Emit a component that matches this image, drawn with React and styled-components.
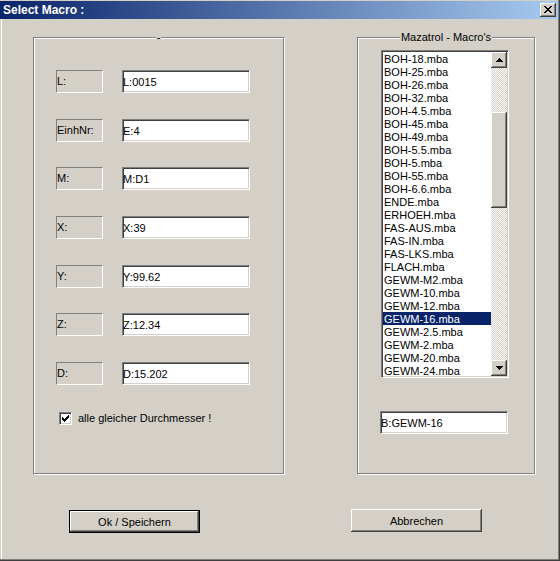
import React from "react";
import styled, { createGlobalStyle } from "styled-components";

const GlobalStyle = createGlobalStyle`
  html, body {
    margin: 0;
    padding: 0;
    background: #d4d0c8;
  }
  body {
    font-family: "Liberation Sans", Arial, sans-serif;
    font-size: 11px;
    color: #000;
  }
`;

const raised = `
  box-shadow: inset -1px -1px #404040, inset 1px 1px #fff, inset -2px -2px #808080;
`;

const sunken = `
  border: 1px solid;
  border-color: #808080 #fff #fff #808080;
  box-shadow: inset 1px 1px #404040, inset -1px -1px #d4d0c8;
`;

const Window = styled.div`
  width: 560px;
  height: 561px;
  box-sizing: border-box;
  display: flex;
  flex-direction: column;
  padding: 1px 2px 2px 0;
  background: #d4d0c8;
  box-shadow: inset -1px -1px #404040, inset -2px -2px #808080,
    inset 1px 1px #d4d0c8, inset 2px 2px #fff;
`;

const TitleBar = styled.div`
  height: 18px;
  flex-shrink: 0;
  display: flex;
  align-items: center;
  justify-content: space-between;
  padding: 0 2px 0 3px;
  background: linear-gradient(90deg, #0a246a, #a6caf0);
`;

const TitleText = styled.span`
  color: #fff;
  font-weight: bold;
  font-size: 12px;
  line-height: 18px;
  white-space: nowrap;
`;

const CloseButton = styled.div`
  width: 16px;
  height: 14px;
  box-sizing: border-box;
  background: #d4d0c8;
  display: flex;
  align-items: center;
  justify-content: center;
  ${raised}

  svg {
    display: block;
    margin: 0 1px 1px 0;
  }
`;

const Body = styled.div`
  flex: 1;
  display: flex;
  flex-direction: column;
  padding: 18px 0 0 33px;
`;

const Groups = styled.div`
  display: flex;
  gap: 73px;
`;

const Group = styled.div`
  position: relative;
  box-sizing: border-box;
  width: ${({ $width }) => $width}px;
  height: 437px;
  border: 1px solid #808080;
  box-shadow: 1px 1px 0 #fff, inset 1px 1px 0 #fff;
  padding: ${({ $pad }) => $pad};
`;

const Caption = styled.span`
  position: absolute;
  top: -7px;
  left: 0;
  right: 0;
  margin: 0 auto;
  width: fit-content;
  padding: 0 1px;
  background: #d4d0c8;
  line-height: 13px;
  white-space: nowrap;
`;

const FieldGrid = styled.div`
  display: grid;
  grid-template-columns: 47px 128px;
  column-gap: 19px;
  row-gap: 25.67px;
`;

const Label = styled.div`
  box-sizing: border-box;
  height: 23px;
  border: 1px solid;
  border-color: #808080 #fff #fff #808080;
  padding: 4px 0 0 0;
  line-height: 13px;
  white-space: nowrap;
`;

const TextBox = styled.input`
  box-sizing: border-box;
  width: 128px;
  height: 23px;
  margin: 0 0 0 ${({ $shift }) => $shift || 0}px;
  padding: 1px 0 0 0;
  background: #fff;
  font-family: "Liberation Sans", Arial, sans-serif;
  font-size: 11px;
  color: #000;
  outline: none;
  ${sunken}
`;

const CheckRow = styled.label`
  display: flex;
  align-items: center;
  gap: 6px;
  margin-top: 27px;
  padding-left: 3px;
  line-height: 13px;
`;

const CheckBox = styled.span`
  width: 13px;
  height: 13px;
  box-sizing: border-box;
  background: #fff;
  display: flex;
  align-items: center;
  justify-content: center;
  ${sunken}

  svg {
    display: block;
  }
`;

const ListBox = styled.div`
  width: 128px;
  height: 328px;
  box-sizing: border-box;
  display: flex;
  background: #fff;
  padding: 1px;
  ${sunken}
`;

const Items = styled.ul`
  flex: 1;
  margin: 0;
  padding: 0;
  list-style: none;
  overflow: hidden;
`;

const Item = styled.li`
  height: 13px;
  line-height: 15px;
  padding-left: 1px;
  white-space: nowrap;
  background: ${({ $selected }) => ($selected ? "#0a246a" : "transparent")};
  color: ${({ $selected }) => ($selected ? "#fff" : "#000")};
`;

const ScrollBar = styled.div`
  width: 16px;
  flex-shrink: 0;
  display: flex;
  flex-direction: column;
`;

const ScrollButton = styled.div`
  height: 16px;
  flex-shrink: 0;
  box-sizing: border-box;
  background: #d4d0c8;
  display: flex;
  align-items: center;
  justify-content: center;
  ${raised}

  svg {
    display: block;
  }
`;

const Track = styled.div`
  flex: ${({ $size }) => ($size ? `0 0 ${$size}px` : "1")};
  background: repeating-conic-gradient(#fff 0 25%, #d4d0c8 0 50%) 0 0 / 2px 2px;
`;

const Thumb = styled.div`
  height: 96px;
  flex-shrink: 0;
  background: #d4d0c8;
  ${raised}
`;

const SelectedField = styled(TextBox)`
  margin-top: 33px;
`;

const ButtonRow = styled.div`
  display: flex;
  align-items: flex-start;
  gap: 151px;
  margin-top: 35px;
  padding-left: 36px;
`;

const Button = styled.button`
  width: 131px;
  height: 23px;
  box-sizing: border-box;
  margin-top: ${({ $default }) => ($default ? "1px" : "0")};
  padding: 0;
  border: ${({ $default }) => ($default ? "1px solid #000" : "none")};
  background: #d4d0c8;
  font-family: "Liberation Sans", Arial, sans-serif;
  font-size: 11px;
  color: #000;
  ${raised}
`;

const fields = [
  ["L:", "L:0015"],
  ["EinhNr:", "E:4"],
  ["M:", "M:D1"],
  ["X:", "X:39"],
  ["Y:", "Y:99.62"],
  ["Z:", "Z:12.34"],
  ["D:", "D:15.202"],
];

const macros = [
  "BOH-18.mba", "BOH-25.mba", "BOH-26.mba", "BOH-32.mba", "BOH-4.5.mba",
  "BOH-45.mba", "BOH-49.mba", "BOH-5.5.mba", "BOH-5.mba", "BOH-55.mba",
  "BOH-6.6.mba", "ENDE.mba", "ERHOEH.mba", "FAS-AUS.mba", "FAS-IN.mba",
  "FAS-LKS.mba", "FLACH.mba", "GEWM-M2.mba", "GEWM-10.mba", "GEWM-12.mba",
  "GEWM-16.mba", "GEWM-2.5.mba", "GEWM-2.mba", "GEWM-20.mba", "GEWM-24.mba",
];

const CloseGlyph = () => (
  <svg width="8" height="7" viewBox="0 0 8 7" shapeRendering="crispEdges">
    <path
      fill="#000"
      d="M0 0h2v1h-2z M6 0h2v1h-2z M1 1h2v1h-2z M5 1h2v1h-2z M2 2h4v1h-4z M3 3h2v1h-2z M2 4h4v1h-4z M1 5h2v1h-2z M5 5h2v1h-2z M0 6h2v1h-2z M6 6h2v1h-2z"
    />
  </svg>
);

const CheckGlyph = () => (
  <svg width="7" height="7" viewBox="0 0 7 7" shapeRendering="crispEdges">
    <path
      fill="#000"
      d="M6 0h1v1h-1z M5 1h2v1h-2z M0 2h1v1h-1z M4 2h3v1h-3z M0 3h2v1h-2z M3 3h3v1h-3z M0 4h5v1h-5z M1 5h3v1h-3z M2 6h1v1h-1z"
    />
  </svg>
);

const Arrow = ({ down }) => (
  <svg width="7" height="4" viewBox="0 0 7 4" shapeRendering="crispEdges">
    <path fill="#000" d={down ? "M0 0h7L3.5 4z" : "M3.5 0L7 4H0z"} />
  </svg>
);

const App = () => {
  const selected = "GEWM-16.mba";

  return (
    <>
      <GlobalStyle />
      <Window>
        <TitleBar>
          <TitleText>Select Macro :</TitleText>
          <CloseButton>
            <CloseGlyph />
          </CloseButton>
        </TitleBar>

        <Body>
          <Groups>
            {/* values */}
            <Group $width={251} $pad="32px 0 0 22px">
              <Caption>-</Caption>
              <FieldGrid>
                {fields.map(([label, value]) => (
                  <React.Fragment key={label}>
                    <Label>{label}</Label>
                    <TextBox readOnly defaultValue={value} />
                  </React.Fragment>
                ))}
              </FieldGrid>
              <CheckRow>
                <CheckBox>
                  <CheckGlyph />
                </CheckBox>
                alle gleicher Durchmesser !
              </CheckRow>
            </Group>

            {/* macro list */}
            <Group $width={178} $pad="12px 0 0 23px">
              <Caption>Mazatrol - Macro's</Caption>
              <ListBox>
                <Items>
                  {macros.map((m) => (
                    <Item key={m} $selected={m === selected}>
                      {m}
                    </Item>
                  ))}
                </Items>
                <ScrollBar>
                  <ScrollButton>
                    <Arrow />
                  </ScrollButton>
                  <Track $size={44} />
                  <Thumb />
                  <Track />
                  <ScrollButton>
                    <Arrow down />
                  </ScrollButton>
                </ScrollBar>
              </ListBox>
              <SelectedField readOnly defaultValue="B:GEWM-16" $shift={-1} />
            </Group>
          </Groups>

          <ButtonRow>
            <Button $default>Ok / Speichern</Button>
            <Button>Abbrechen</Button>
          </ButtonRow>
        </Body>
      </Window>
    </>
  );
};

export default App;
